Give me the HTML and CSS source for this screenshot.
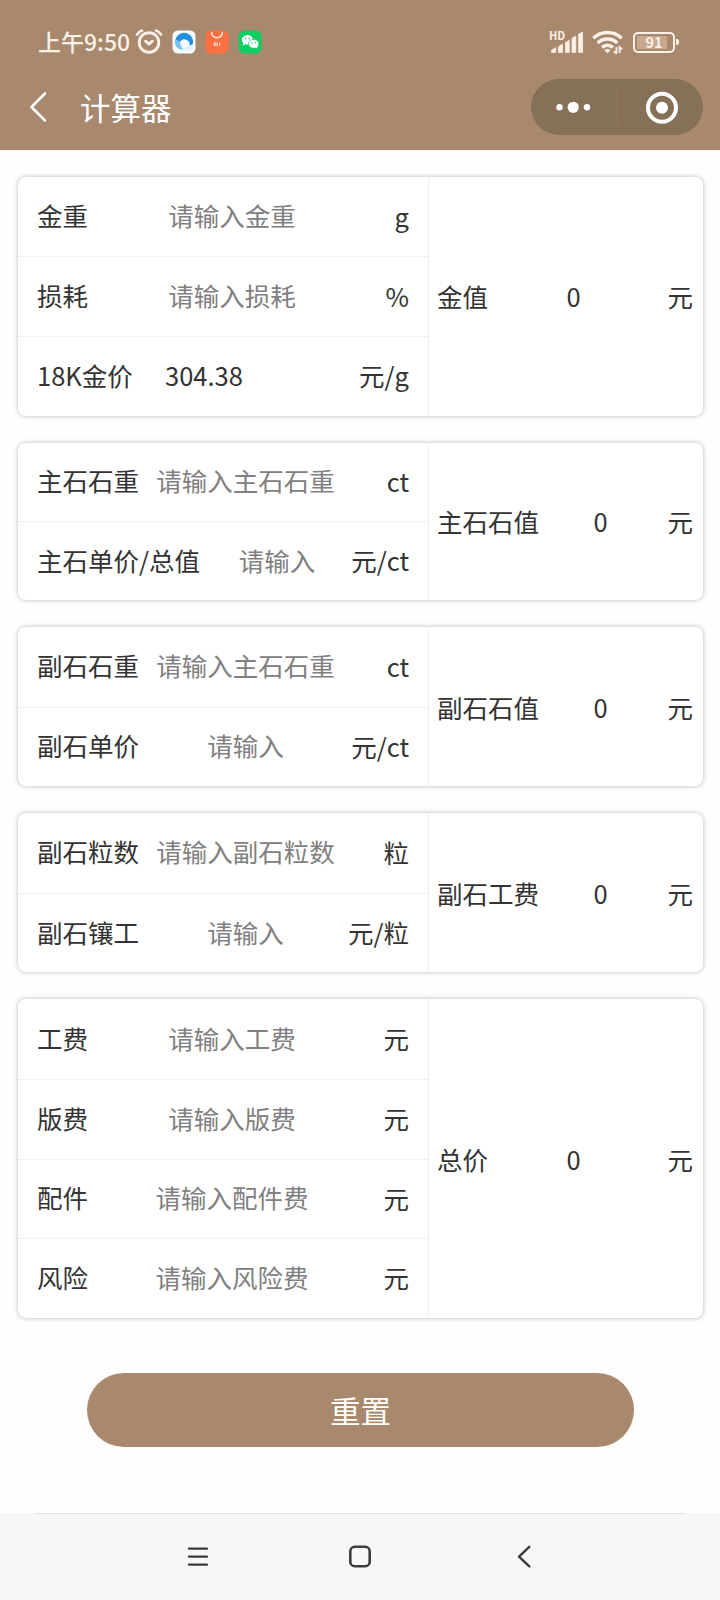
FILE: index.html
```html
<!DOCTYPE html>
<html lang="zh-CN">
<head>
<meta charset="utf-8">
<title>计算器</title>
<link rel="stylesheet" href="styles.css">
</head>
<body>
<header class="header">
  <div class="status">
    <span class="time">上午9:50</span>
    <svg class="alarm" width="28" height="26" viewBox="0 0 28 26" fill="none" stroke="#fdf0e6" stroke-width="2.9" stroke-linecap="round"><circle cx="14" cy="13.5" r="9.8"/><path d="M2 5.5 Q4 2.6 7 1.6M26 5.5Q24 2.6 21 1.6" stroke-width="2.6"/><path d="M10.6 12.2 14 15 17.4 12.2"/></svg>
    <svg class="app" width="24" height="24" viewBox="0 0 24 24"><rect x=".5" y=".5" width="23" height="23" rx="5.5" fill="#f8fbff"/><path d="M5.4 17.6A8.9 8.9 0 1 1 20.6 14.5L17.5 15.8A5.2 5.2 0 0 0 8.3 11.5Q6.5 14.5 8.4 18.8Z" fill="#2190e2"/><path d="M3.6 9.5Q2 14.8 5.8 18.2Q8 20 12 19.5Q8 17 8.3 11.5Z" fill="#79c4f5"/><path d="M11.5 20Q12 16.7 15 16.8Q16.4 14.2 18.8 16Q21.5 16.5 21 19.3Q20.5 20.5 18.5 20.5H13Z" fill="#e3f0fb"/></svg>
    <svg class="app" width="24" height="24" viewBox="0 0 24 24"><rect x=".5" y=".5" width="23" height="23" rx="5.5" fill="#fd7041"/><path d="M6.6 2.5A5.4 5.2 0 0 0 17.4 2.5" fill="none" stroke="#fff0e4" stroke-width="1.4" stroke-linecap="round"/><path d="M9.3 16V12.8H11.6Q12.3 12.8 12.3 13.5V16M10.8 14V16M14.6 12.5V16" fill="none" stroke="#ffeade" stroke-width="1"/></svg>
    <svg class="app" width="24" height="24" viewBox="0 0 24 24"><rect x=".5" y=".5" width="23" height="23" rx="5.5" fill="#0ecd63"/><path d="M4.6 15.5 5.4 13A5.5 4.7 0 1 1 9.5 14.4L7.4 14.2Z" fill="#fff"/><ellipse cx="15.7" cy="13.8" rx="5.2" ry="4.4" fill="#fff" stroke="#0ecd63" stroke-width=".7"/><path d="M17 17.2 19.6 18.6 19 16Z" fill="#fff"/><g fill="#0ecd63"><circle cx="7.6" cy="8.6" r=".8"/><circle cx="11.3" cy="8.6" r=".8"/><circle cx="14" cy="12.8" r=".7"/><circle cx="17.4" cy="12.8" r=".7"/></g></svg>
    <div class="signals">
      <div class="cell">
        <span class="hd">HD</span>
        <svg width="34" height="24" viewBox="0 0 34 24" fill="#fdf0e6"><path d="M1.5 22.5v-2.2l4.3-2.8v5ZM8.5 22.5v-6l4-2.4v8.4ZM15.5 22.5v-10l3.8-2.2v12.2ZM22 22.5V8.3l3.8-2.2v16.4ZM28.6 22.5V4l4-2v20.5Z" stroke="#fdf0e6" stroke-width=".7" stroke-linejoin="round"/></svg>
      </div>
      <svg class="wifi" width="32" height="24" viewBox="0 0 32 24" fill="none" stroke="#fdf0e6" stroke-width="3.4"><path d="M1.3 8.2A20.5 20.5 0 0 1 29.7 8.2"/><path d="M5.7 13A14 14 0 0 1 25.3 13"/><path d="M10 17.4A8 8 0 0 1 21 17.4"/><path d="M12.4 20.2Q15.5 17.8 18.6 20.2L15.5 23.2Z" fill="#fdf0e6" stroke="none"/><path d="M24.4 17V23.5L21.8 21.3M27.6 23V17L30.2 19.2" stroke-width="1.9"/></svg>
      <div class="battery"><span class="level">91</span></div>
    </div>
  </div>
  <div class="navbar">
    <svg class="back" width="20" height="32" viewBox="0 0 20 32" fill="none" stroke="#fff" stroke-width="2.6" stroke-linecap="round" stroke-linejoin="round"><path d="M17 2.5 3.5 16 17 29.5"/></svg>
    <h1 class="title">计算器</h1>
    <div class="capsule">
      <svg width="172" height="56" viewBox="0 0 172 56"><g fill="#fff"><circle cx="28.5" cy="28.3" r="3.2"/><circle cx="42.2" cy="28.3" r="5.6"/><circle cx="56" cy="28.3" r="3.2"/><circle cx="131" cy="28.8" r="6"/></g><path d="M86 11V45" stroke="#927a62" stroke-width="1.2"/><circle cx="131" cy="28.8" r="14" fill="none" stroke="#fff" stroke-width="4"/></svg>
    </div>
  </div>
</header>

<main class="content">
  <section class="card">
    <div class="fields">
      <div class="row"><span class="label">金重</span><span class="input">请输入金重</span><span class="unit">g</span></div>
      <div class="row"><span class="label">损耗</span><span class="input">请输入损耗</span><span class="unit">%</span></div>
      <div class="row row-price"><span class="label">18K金价</span><span class="input filled">304.38</span><span class="unit">元/g</span></div>
    </div>
    <div class="result"><span class="label">金值</span><span class="value">0</span><span class="unit">元</span></div>
  </section>

  <section class="card card-main-stone">
    <div class="fields">
      <div class="row row-wide"><span class="label">主石石重</span><span class="input">请输入主石石重</span><span class="unit">ct</span></div>
      <div class="row row-total"><span class="label">主石单价/总值</span><span class="input">请输入</span><span class="unit">元/ct</span></div>
    </div>
    <div class="result result-wide"><span class="label">主石石值</span><span class="value">0</span><span class="unit">元</span></div>
  </section>

  <section class="card">
    <div class="fields">
      <div class="row row-wide"><span class="label">副石石重</span><span class="input">请输入主石石重</span><span class="unit">ct</span></div>
      <div class="row row-wide"><span class="label">副石单价</span><span class="input">请输入</span><span class="unit">元/ct</span></div>
    </div>
    <div class="result result-wide"><span class="label">副石石值</span><span class="value">0</span><span class="unit">元</span></div>
  </section>

  <section class="card">
    <div class="fields">
      <div class="row row-wide"><span class="label">副石粒数</span><span class="input">请输入副石粒数</span><span class="unit">粒</span></div>
      <div class="row row-wide"><span class="label">副石镶工</span><span class="input">请输入</span><span class="unit">元/粒</span></div>
    </div>
    <div class="result result-wide"><span class="label">副石工费</span><span class="value">0</span><span class="unit">元</span></div>
  </section>

  <section class="card">
    <div class="fields">
      <div class="row"><span class="label">工费</span><span class="input">请输入工费</span><span class="unit">元</span></div>
      <div class="row"><span class="label">版费</span><span class="input">请输入版费</span><span class="unit">元</span></div>
      <div class="row"><span class="label">配件</span><span class="input">请输入配件费</span><span class="unit">元</span></div>
      <div class="row"><span class="label">风险</span><span class="input">请输入风险费</span><span class="unit">元</span></div>
    </div>
    <div class="result"><span class="label">总价</span><span class="value">0</span><span class="unit">元</span></div>
  </section>

  <button class="reset" type="button">重置</button>
</main>

<footer class="system-nav">
  <svg width="24" height="26" viewBox="0 0 24 26" stroke="#3c3c3c" stroke-width="2.4" stroke-linecap="round"><path d="M3 4.6H21M3 12.6H21M3 20.6H21"/></svg>
  <svg width="24" height="26" viewBox="0 0 24 26" fill="none" stroke="#3c3c3c" stroke-width="2.6"><rect x="1.3" y="2.8" width="19.4" height="19.4" rx="4.5"/></svg>
  <svg width="24" height="26" viewBox="0 0 24 26" fill="none" stroke="#3c3c3c" stroke-width="2.4" stroke-linecap="round" stroke-linejoin="round"><path d="M17.3 2.8 7 12.6 17.3 22.4"/></svg>
</footer>
</body>
</html>
```

FILE: styles.css
```css
* { box-sizing: border-box; }

body {
  margin: 0;
  width: 720px;
  height: 1600px;
  display: flex;
  flex-direction: column;
  overflow: hidden;
  background: #fefefe;
  color: #333;
  font-family: "Noto Sans CJK SC", sans-serif;
  font-size: 25.5px;
  line-height: 36px;
}

svg { display: block; flex: none; }

/* Header */
.header { height: 150px; background: #a8896d; color: #fff; }

.status {
  height: 64px;
  padding: 20px 45px 0 38px;
  display: flex;
  align-items: center;
  color: #fdf0e6;
}
.time { width: 97px; padding-bottom: 2px; font-size: 23px; font-weight: 500; white-space: nowrap; }
.alarm { margin-right: 8.5px; }
.app { margin-right: 9.1px; }

.signals { margin-left: auto; display: flex; align-items: center; }
.cell { position: relative; width: 34px; }
.hd {
  position: absolute;
  left: -1px;
  top: 0;
  font: 700 11px/11px "Noto Sans CJK SC", sans-serif;
}
.wifi { margin: 0 9px 0 8px; }
.battery {
  position: relative;
  width: 42px;
  height: 21px;
  padding: 2px;
  border: 2.5px solid #fdf0e6;
  border-radius: 5px;
}
.battery::after {
  content: "";
  position: absolute;
  right: -6px;
  top: 5px;
  width: 3px;
  height: 6px;
  border-radius: 0 2px 2px 0;
  background: #fdf0e6;
}
.level {
  display: block;
  width: 30px;
  height: 13px;
  border-radius: 1px;
  background: #c9a78d;
  font: 700 14.5px/12px "Noto Sans CJK SC", sans-serif;
  text-align: center;
  padding-left: 4px;
}

.navbar {
  height: 86px;
  padding: 0 17px 0 28px;
  display: flex;
  align-items: center;
}
.title { margin: 0 0 0 32px; font-size: 30.5px; font-weight: 400; }
.capsule {
  width: 172px;
  height: 56px;
  margin-left: auto;
  border-radius: 28px;
  background: #867058;
}

/* Calculator cards */
.content {
  flex: 1;
  padding: 26.8px 17px 0 18px;
  display: flex;
  flex-direction: column;
  gap: 27px;
}
.card {
  display: grid;
  grid-template-columns: 410.5px 1fr;
  border-radius: 8px;
  background: #fff;
  box-shadow: 0 0 5px rgba(0, 0, 0, .28);
}
.fields { border-right: 1.5px solid #f0f0f0; }
.row {
  height: 79.6px;
  padding: 0 18.5px 3px 19px;
  display: grid;
  grid-template-columns: 78px 1fr 60px;
  align-items: center;
  white-space: nowrap;
}
.card-main-stone .row { height: 78.7px; }
.row + .row { border-top: 1.5px solid #f0f0f0; }
.row-wide { grid-template-columns: 105px 1fr 60px; }
.row-total { grid-template-columns: 168px 1fr 60px; }
.row-price { grid-template-columns: 128px 1fr 60px; }
.input { color: #808080; text-align: center; }
.filled { color: #333; text-align: left; }
.unit { display: flex; justify-content: flex-end; }
.row .unit { padding-top: 1px; }

.result {
  padding: 0 10px 0 8.5px;
  display: grid;
  grid-template-columns: 51px 1fr 34px;
  align-items: center;
  white-space: nowrap;
}
.result-wide { grid-template-columns: 105px 1fr 34px; }
.value { text-align: center; }

.reset {
  width: 547px;
  height: 74px;
  margin: 28px auto 0;
  padding: 0;
  border: 0;
  border-radius: 37px;
  background: #a8896d;
  color: #fff;
  font-family: inherit;
  font-size: 30.5px;
}

/* System navigation */
.system-nav {
  height: 87px;
  padding: 0 184px 0 186px;
  display: flex;
  align-items: center;
  justify-content: space-between;
  background: linear-gradient(#dedede, #dedede) 35px 0 / 650px 1px no-repeat #f7f7f7;
}
```
